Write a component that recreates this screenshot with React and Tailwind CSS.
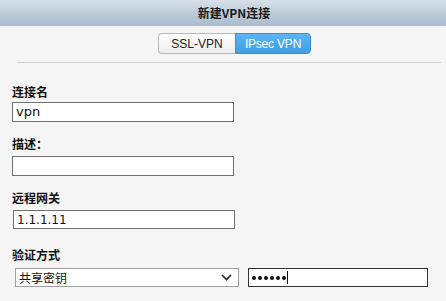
import React from "react";

const cjk = { fontFamily: '"Noto Sans CJK SC", "Noto Sans", sans-serif' };

export default function App() {
  return (
    <div className="w-[446px] h-[301px] bg-[#f5f5f5] overflow-hidden" style={cjk}>
      <div className="h-[26px] bg-gradient-to-b from-[#d6dfe8] to-[#a8bbcd] flex items-center justify-center pl-[22px] text-[12px] font-bold text-[#1a1a1a]">
        新建VPN连接
      </div>
      <div className="mt-[7px] flex pl-[158px]">
        <div className="flex h-[21px] text-[12px]" style={{ fontFamily: '"Liberation Sans", Arial, sans-serif' }}>
          <div className="w-[77px] flex items-center justify-center rounded-l-[4px] border border-[#b8b8b8] border-r-0 bg-gradient-to-b from-white to-[#ececec] text-[#222]">
            SSL-VPN
          </div>
          <div className="w-[76px] flex items-center justify-center rounded-r-[4px] border border-[#3a8fd0] bg-gradient-to-b from-[#5cb4f2] to-[#3e9ee6] text-white tracking-[-0.2px]">
            IPsec VPN
          </div>
        </div>
      </div>
      <div className="mt-[8px] ml-[17px] mr-[5px] h-px bg-[#d2d2d2]" />
      <div className="pl-[12px]">
        <div className="mt-[21px] h-4 leading-4 text-[12px] font-bold text-[#111]">连接名</div>
        <div className="mt-[2px] w-[222px] h-[20px] border border-[#707070] bg-white flex items-center pl-[3px] text-[13px] text-[#111]" style={{ fontFamily: '"DejaVu Sans", Verdana, sans-serif' }}>
          vpn
        </div>
        <div className="mt-[14px] h-4 leading-4 text-[12px] font-bold text-[#111]">描述：</div>
        <div className="mt-[4px] w-[222px] h-[20px] border border-[#707070] bg-white" />
        <div className="mt-[14px] h-4 leading-4 text-[12px] font-bold text-[#111]">远程网关</div>
        <div className="mt-[4px] ml-[1px] w-[222px] h-[19px] border border-[#707070] bg-white flex items-center pl-[3px] text-[12px] text-[#111]" style={{ fontFamily: '"DejaVu Sans", Verdana, sans-serif' }}>
          1.1.1.11
        </div>
        <div className="mt-[18px] h-4 leading-4 text-[12px] font-bold text-[#111]">验证方式</div>
        <div className="mt-[5px] flex items-center">
          <div className="ml-[3px] w-[224px] h-[19px] border border-[#a0a0a0] bg-white flex items-center justify-between pl-[3px] pr-[6px] text-[12px] text-[#111]">
            <span>共享密钥</span>
            <svg width="11" height="7" viewBox="0 0 11 7" fill="none">
              <path d="M1 1l4.5 4.5L10 1" stroke="#222" strokeWidth="1.6" />
            </svg>
          </div>
          <div className="ml-[9px] w-[180px] h-[19px] border border-[#333] bg-white flex items-center pl-[3px]">
            <span className="flex gap-[2px]">
              {[0, 1, 2, 3, 4, 5].map((i) => (
                <span key={i} className="w-[4px] h-[4px] rounded-full bg-[#111]" />
              ))}
            </span>
            <span className="ml-[1px] w-px h-[13px] bg-[#111]" />
          </div>
        </div>
      </div>
    </div>
  );
}
